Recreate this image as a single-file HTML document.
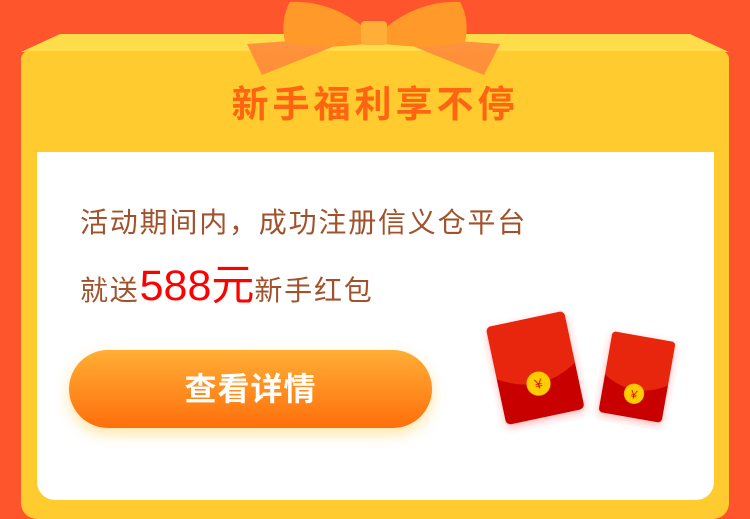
<!DOCTYPE html>
<html><head><meta charset="utf-8"><style>
html,body{margin:0;padding:0}
body{width:750px;height:519px;position:relative;overflow:hidden;background:#ff552d;font-family:"Liberation Sans","Noto Sans CJK SC",sans-serif}
.box{position:absolute;left:21px;top:51px;width:708px;height:468px;background:#ffcb2e;border-radius:8px 8px 16px 16px}
.panel{position:absolute;left:37px;top:152px;width:677px;height:348px;background:#fff;border-radius:0 0 18px 18px}
.title{position:absolute;left:0;width:750px;top:82px;text-align:center;font-size:37px;font-weight:bold;color:#ff6412;letter-spacing:4px;line-height:46px}
.t1{position:absolute;left:80px;top:205px;font-size:28px;letter-spacing:1.8px;color:#a0522d;line-height:36px;white-space:nowrap}
.t2{position:absolute;left:80px;top:262px;font-size:28px;letter-spacing:1.8px;color:#a0522d;line-height:48px;white-space:nowrap}
.t2 b{font-weight:normal;color:#ff0000;font-size:43px;letter-spacing:0}
.btn{position:absolute;left:69px;top:350px;width:363px;height:78px;border-radius:39px;background:linear-gradient(#ffae36,#ff6f0c);box-shadow:0 6px 14px rgba(255,200,60,.45);color:#fff;font-size:32px;font-weight:bold;text-align:center;line-height:78px;letter-spacing:1px}
</style></head><body>
<svg width="750" height="519" style="position:absolute;left:0;top:0">
<polygon points="21,52 60,34 690,34 729,52" fill="#ffdc4a"/>
</svg>
<div class="box"></div>
<div class="panel"></div>
<svg width="750" height="160" style="position:absolute;left:0;top:0">
<polygon points="247,44 360,36 262,75" fill="#ff8a3c" opacity=".9"/>
<polygon points="500,44 388,36 484,75" fill="#ff8a3c" opacity=".9"/>
<path d="M290,2 Q330,0 365,28 L365,44 Q320,50 285,42 Q280,20 290,2Z" fill="#ff9a2a"/>
<path d="M460,2 Q420,0 385,28 L385,44 Q430,50 465,42 Q470,20 460,2Z" fill="#ff9a2a"/>
<rect x="361" y="21" width="26" height="24" rx="4" fill="#ffae38"/>
</svg>
<div class="title">新手福利享不停</div>
<div class="t1">活动期间内，成功注册信义仓平台</div>
<div class="t2">就送<b>588元</b>新手红包</div>
<div class="btn">查看详情</div>
<svg width="750" height="519" style="position:absolute;left:0;top:0">
<defs><filter id="s"><feDropShadow dx="0" dy="3" stdDeviation="4" flood-color="#ff3030" flood-opacity=".35"/></filter></defs>
<g transform="rotate(-12 535 367)" filter="url(#s)">
<rect x="495" y="318" width="80" height="100" rx="5" fill="#c80000"/>
<path d="M495,323 a5,5 0 0 1 5,-5 h70 a5,5 0 0 1 5,5 v48 q-40,25 -80,0z" fill="#e8280a"/>
<circle cx="535" cy="384" r="12" fill="#ffcc00"/>
<text x="535" y="389" font-size="14" fill="#d80000" text-anchor="middle">¥</text>
</g>
<g transform="rotate(10 637 377)" filter="url(#s)">
<rect x="605" y="336" width="64" height="82" rx="4" fill="#c80000"/>
<path d="M605,340 a4,4 0 0 1 4,-4 h56 a4,4 0 0 1 4,4 v40 q-32,20 -64,0z" fill="#e8280a"/>
<circle cx="637" cy="394" r="10" fill="#ffcc00"/>
<text x="637" y="399" font-size="12" fill="#d80000" text-anchor="middle">¥</text>
</g>
</svg>
</body></html>
